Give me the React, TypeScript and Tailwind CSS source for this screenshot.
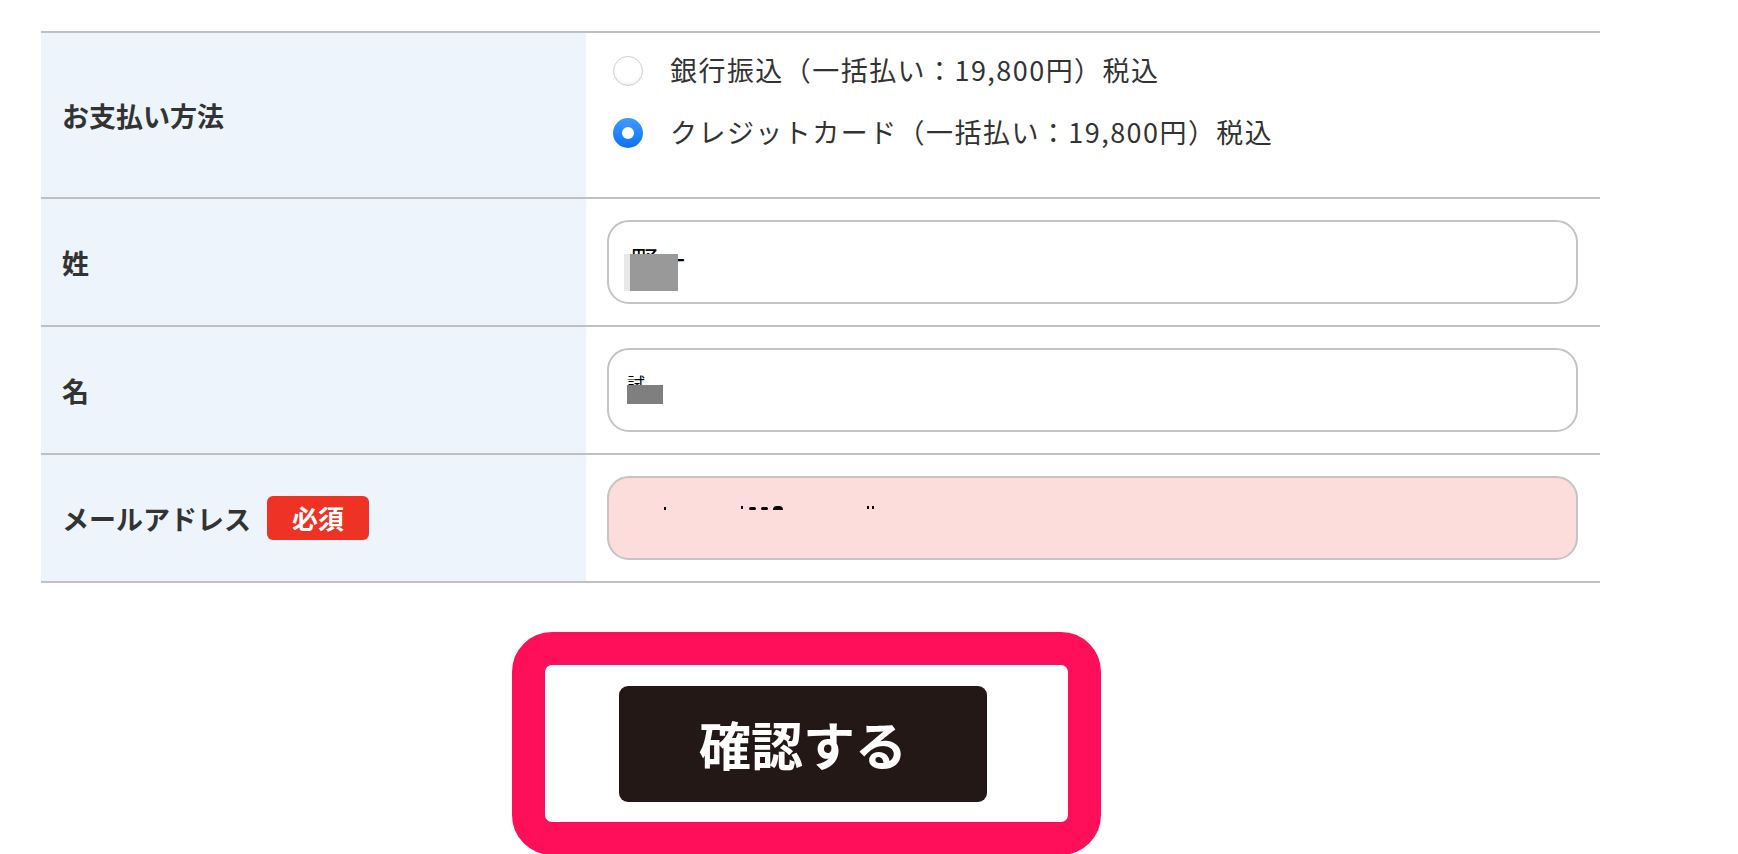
import React from 'react'

const FONT = '"Hiragino Sans", "Noto Sans CJK JP", "Noto Sans", sans-serif'

const OPTIONS = [
  { label: '銀行振込（一括払い：19,800円）税込', checked: false },
  { label: 'クレジットカード（一括払い：19,800円）税込', checked: true },
]

function Radio({ checked }: { checked: boolean }) {
  if (checked) {
    return (
      <span className="flex h-[30px] w-[30px] shrink-0 items-center justify-center rounded-full bg-gradient-to-b from-[#3d9bff] to-[#0a70f6]">
        <span className="h-[12px] w-[12px] rounded-full bg-white" />
      </span>
    )
  }
  return (
    <span className="h-[30px] w-[30px] shrink-0 rounded-full border border-[#cfcfcf] bg-white shadow-[inset_0_-2px_3px_rgba(0,0,0,0.06)]" />
  )
}

function Label({ children }: { children: React.ReactNode }) {
  return (
    <div className="flex w-[545px] shrink-0 items-center gap-[16px] bg-[#edf4fb] pl-[21px]">
      <span className="text-[27px] font-bold leading-none text-[#333333]">{children}</span>
    </div>
  )
}

export default function App() {
  return (
    <div className="min-h-[854px] w-[1738px] bg-white pt-[31px]" style={{ fontFamily: FONT }}>
      {/* Form table */}
      <div className="ml-[41px] w-[1559px] border-b-2 border-[#c0c0c0]">
        {/* Payment method */}
        <div className="flex h-[166px] border-t-2 border-[#c0c0c0]">
          <Label>お支払い方法</Label>
          <div className="flex flex-1 flex-col gap-[22px] pl-[27px] pt-[18px]">
            {OPTIONS.map((o) => (
              <div key={o.label} className="flex h-[40px] items-center gap-[27px]">
                <Radio checked={o.checked} />
                <span className="-mt-[3px] text-[27px] leading-none tracking-[1.45px] text-[#333333]">{o.label}</span>
              </div>
            ))}
          </div>
        </div>

        {/* Last name */}
        <div className="flex h-[128px] border-t-2 border-[#c0c0c0]">
          <Label>姓</Label>
          <div className="flex flex-1 items-center pl-[21px] pr-[22px]">
            <div className="relative h-[84px] w-full overflow-hidden rounded-[22px] border-2 border-[#c4c4c4] bg-white">
              <span className="absolute left-[22px] top-[24px] text-[27px] leading-none text-black">野一</span>
              <span className="absolute left-[15px] top-[32px] h-[37px] w-[6px] bg-[#e8e8e8]" />
              <span className="absolute left-[21px] top-[32px] h-[37px] w-[48px] bg-[#999999]" />
            </div>
          </div>
        </div>

        {/* First name */}
        <div className="flex h-[128px] border-t-2 border-[#c0c0c0]">
          <Label>名</Label>
          <div className="flex flex-1 items-center pl-[21px] pr-[22px]">
            <div className="relative h-[84px] w-full overflow-hidden rounded-[22px] border-2 border-[#c4c4c4] bg-white">
              <span className="absolute left-[18px] top-[24px] text-[18px] leading-none text-black">試</span>
              <span className="absolute left-[18px] top-[35px] h-[19px] w-[36px] bg-[#7f7f7f]" />
            </div>
          </div>
        </div>

        {/* Email */}
        <div className="flex h-[128px] border-t-2 border-[#c0c0c0]">
          <div className="flex w-[545px] shrink-0 items-center gap-[16px] bg-[#edf4fb] pl-[21px]">
            <span className="text-[27px] font-bold leading-none text-[#333333]">メールアドレス</span>
            <span className="flex h-[44px] items-center rounded-[6px] bg-[#ee3224] px-[25px] text-[26px] font-bold leading-none text-white">
              必須
            </span>
          </div>
          <div className="flex flex-1 items-center pl-[21px] pr-[22px]">
            <div className="relative h-[84px] w-full rounded-[22px] border-2 border-[#c4c4c4] bg-[#fddcdc]">
              {/* remnants of masked address */}
              <span className="absolute left-[55px] top-[29px] h-[3px] w-[2px] bg-black" />
              <span className="absolute left-[132px] top-[28px] h-[3px] w-[2px] bg-black" />
              <span className="absolute left-[140px] top-[29px] h-[3px] w-[7px] rounded-full bg-black" />
              <span className="absolute left-[152px] top-[29px] h-[3px] w-[7px] rounded-full bg-black" />
              <span className="absolute left-[164px] top-[28px] h-[4px] w-[10px] rounded-t-full bg-black" />
              <span className="absolute left-[258px] top-[28px] h-[3px] w-[2px] bg-black" />
              <span className="absolute left-[263px] top-[28px] h-[3px] w-[2px] bg-black" />
            </div>
          </div>
        </div>
      </div>

      {/* Confirm button with highlight frame */}
      <div className="ml-[512px] mt-[49px] w-[589px] rounded-[40px] border-[33px] border-[#ff0f5a] bg-white">
        <div className="flex h-[157px] items-center pl-[74px]">
          <button className="flex h-[116px] w-[368px] items-center justify-center rounded-[9px] bg-[#231815] text-[52px] font-bold leading-none text-white">
            確認する
          </button>
        </div>
      </div>
    </div>
  )
}
